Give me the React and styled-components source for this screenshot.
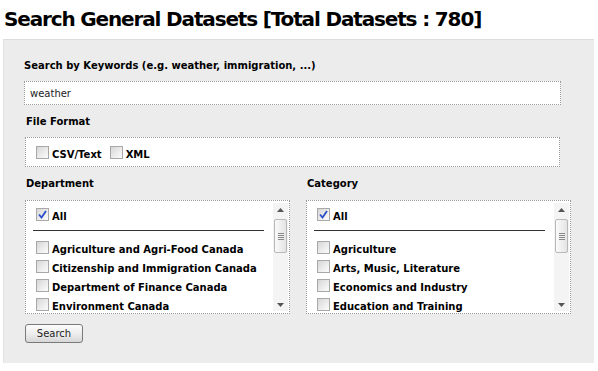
import React from "react";
import styled, { createGlobalStyle } from "styled-components";

const GlobalStyle = createGlobalStyle`
  html, body {
    margin: 0;
    padding: 0;
    background: #ffffff;
    font-family: "DejaVu Sans", Verdana, sans-serif;
    color: #000;
  }
`;

const Page = styled.div`
  width: 598px;
  height: 371px;
  padding: 0 4px 0 3px;
  box-sizing: border-box;
  overflow: hidden;
`;

const Title = styled.h1`
  margin: 0;
  padding: 7px 0 0 1px;
  height: 39px;
  box-sizing: border-box;
  font-size: 20px;
  line-height: 24px;
  font-weight: bold;
  letter-spacing: -1.15px;
  white-space: nowrap;
`;

const Panel = styled.div`
  background: #ececec;
  border-top: 1px solid #dcdcdc;
  border-left: 1px solid #e2e2e2;
  padding: 19px 0 21px 20px;
  height: 324px;
  box-sizing: border-box;
`;

const Label = styled.div`
  font-size: 10px;
  font-weight: bold;
  line-height: 14px;
  height: 14px;
  padding-left: ${(p) => p.$indent || 0}px;
  margin-bottom: ${(p) => p.$gap || 0}px;
`;

const KeywordInput = styled.input`
  display: block;
  width: 537px;
  height: 24px;
  box-sizing: border-box;
  border: 1px dotted #9a9a9a;
  background: #fff;
  padding: 0 5px;
  font-family: "DejaVu Sans", Verdana, sans-serif;
  font-size: 10px;
  color: #222;
  outline: none;
  margin: 0 0 10px;
`;

const FormatBox = styled.div`
  width: 535px;
  height: 30px;
  box-sizing: border-box;
  margin: 0 0 10px 1px;
  border: 1px dotted #9a9a9a;
  background: #fff;
  display: flex;
  align-items: center;
  padding: 1px 0 0 10px;
`;

const Option = styled.label`
  display: flex;
  align-items: flex-end;
  gap: 3px;
  font-size: 10px;
  font-weight: bold;
  line-height: 13px;
  height: ${(p) => p.$height || 13}px;
  margin-right: ${(p) => p.$gap || 0}px;
  white-space: nowrap;
`;

const OptionText = styled.span`
  position: relative;
  top: 2px;
`;

const Box = styled.span`
  width: 13px;
  height: 13px;
  flex: 0 0 13px;
  box-sizing: border-box;
  border: 1px solid #a8a8a8;
  background: linear-gradient(135deg, #d6d6d6 0%, #eeeeee 60%, #fbfbfb 100%);
  display: flex;
  align-items: center;
  justify-content: center;
`;

const Columns = styled.div`
  display: grid;
  grid-template-columns: 265px 265px;
  column-gap: 16px;
  padding-left: 1px;
`;

const Column = styled.div`
  display: flex;
  flex-direction: column;
`;

const ListBox = styled.div`
  margin-top: 9px;
  height: 114px;
  box-sizing: border-box;
  border: 1px dotted #9a9a9a;
  background: #fff;
  display: flex;
  overflow: hidden;
`;

const ListBody = styled.div`
  flex: 1;
  padding: 8px 9px 0 10px;
  overflow: hidden;
`;

const Rule = styled.div`
  height: 1px;
  background: #333;
  margin: 9px 0 10px -3px;
`;

const ItemList = styled.div`
  display: flex;
  flex-direction: column;
  gap: 6px;
`;

const Scrollbar = styled.div`
  width: 15px;
  margin: 2px 1px 2px 0;
  background: #f4f4f4;
  display: flex;
  flex-direction: column;
  align-items: center;
`;

const Arrow = styled.div`
  height: ${(p) => (p.$up ? 14 : 12)}px;
  width: 15px;
  display: flex;
  align-items: center;
  justify-content: center;
`;

const Thumb = styled.div`
  width: 13px;
  height: 34px;
  box-sizing: border-box;
  border: 1px solid #b8b8b8;
  border-radius: 2px;
  background: linear-gradient(90deg, #fafafa, #e4e4e4);
  display: flex;
  flex-direction: column;
  align-items: center;
  justify-content: center;
  gap: 1px;
  margin-top: 2px;
`;

const Grip = styled.div`
  width: 6px;
  height: 1px;
  background: #8a8a8a;
`;

const Track = styled.div`
  flex: 1;
`;

const SearchButton = styled.button`
  margin-top: 10px;
  margin-left: 1px;
  width: 58px;
  height: 19px;
  box-sizing: border-box;
  border: 1px solid #7a7a7a;
  border-radius: 3px;
  background: linear-gradient(180deg, #fcfcfc 0%, #ececec 55%, #d6d6d6 100%);
  font-family: "DejaVu Sans", Verdana, sans-serif;
  font-size: 10px;
  color: #222;
  padding: 0;
  line-height: 16px;
`;

const Check = ({ checked }) => (
  <Box>
    {checked && (
      <svg width="9" height="9" viewBox="0 0 9 9">
        <path d="M1 4.5 L3.5 7.5 L8 1" fill="none" stroke="#2a4fc8" strokeWidth="1.8" />
      </svg>
    )}
  </Box>
);

const Triangle = ({ up }) => (
  <svg width="7" height="4" viewBox="0 0 7 4">
    <path d={up ? "M0 4 L3.5 0 L7 4 Z" : "M0 0 L3.5 4 L7 0 Z"} fill="#555" />
  </svg>
);

const FakeScroll = () => (
  <Scrollbar>
    <Arrow $up>
      <Triangle up />
    </Arrow>
    <Thumb>
      <Grip />
      <Grip />
      <Grip />
      <Grip />
    </Thumb>
    <Track />
    <Arrow>
      <Triangle />
    </Arrow>
  </Scrollbar>
);

const departments = [
  "Agriculture and Agri-Food Canada",
  "Citizenship and Immigration Canada",
  "Department of Finance Canada",
  "Environment Canada",
];

const categories = [
  "Agriculture",
  "Arts, Music, Literature",
  "Economics and Industry",
  "Education and Training",
];

const CheckList = ({ items }) => (
  <ListBox>
    <ListBody>
      <Option $height={12}>
        <Check checked />
        <OptionText>All</OptionText>
      </Option>
      <Rule />
      <ItemList>
        {items.map((item) => (
          <Option key={item}>
            <Check />
            <OptionText>{item}</OptionText>
          </Option>
        ))}
      </ItemList>
    </ListBody>
    <FakeScroll />
  </ListBox>
);

export default function App() {
  return (
    <Page>
      <GlobalStyle />
      <Title>Search General Datasets [Total Datasets : 780]</Title>
      <Panel>
        <Label $gap={8}>Search by Keywords (e.g. weather, immigration, ...)</Label>
        <KeywordInput defaultValue="weather" />
        <Label $indent={2} $gap={8}>File Format</Label>
        <FormatBox>
          <Option $gap={8}>
            <Check />
            <OptionText>CSV/Text</OptionText>
          </Option>
          <Option>
            <Check />
            <OptionText>XML</OptionText>
          </Option>
        </FormatBox>
        <Columns>
          <Column>
            <Label $indent={1}>Department</Label>
            <CheckList items={departments} />
          </Column>
          <Column>
            <Label $indent={1}>Category</Label>
            <CheckList items={categories} />
          </Column>
        </Columns>
        <SearchButton>Search</SearchButton>
      </Panel>
    </Page>
  );
}
